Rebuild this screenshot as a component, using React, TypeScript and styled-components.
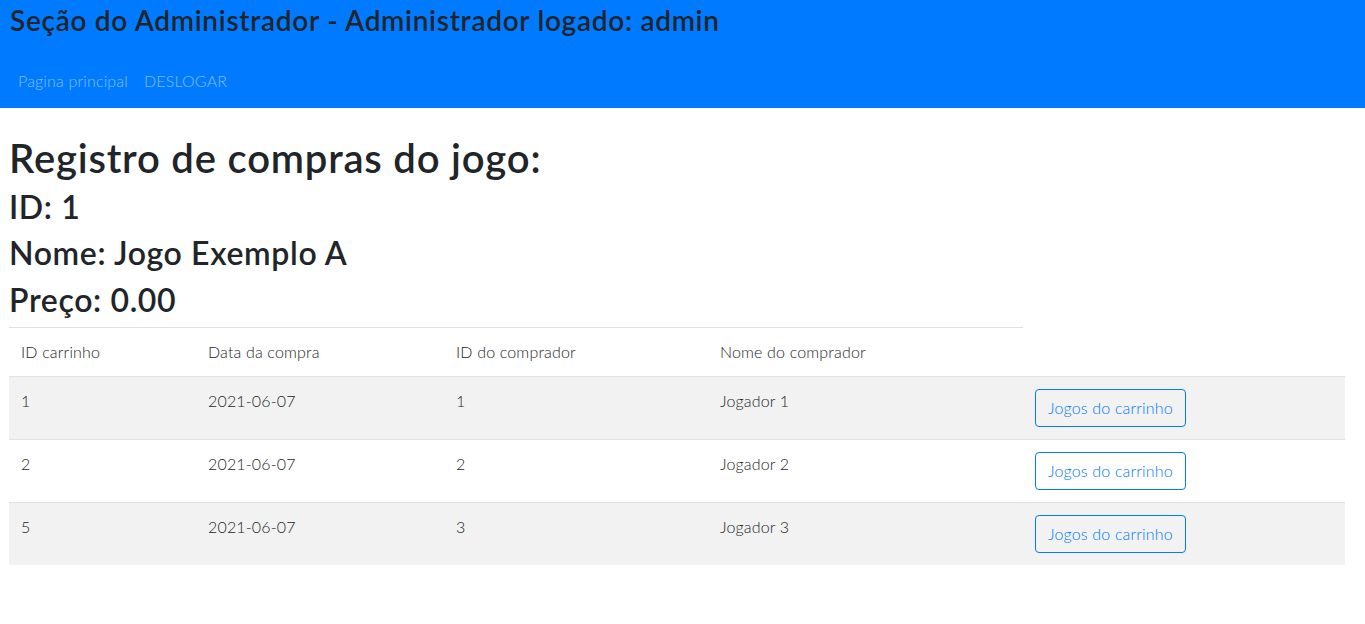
import React from "react";
import styled, { createGlobalStyle } from "styled-components";

const GlobalStyle = createGlobalStyle`
  *, *::before, *::after { box-sizing: border-box; }
  html, body { margin: 0; padding: 0; background: #fff; }
  body {
    font-family: Lato, "Noto Sans", sans-serif;
    font-size: 16px;
    line-height: 1.5;
    font-weight: 300;
    letter-spacing: 0.01em;
    color: #212529;
  }
`;

const Header = styled.header`
  height: 108px;
  background: #007bff;
  padding: 4px 10px 0;
`;

const HeaderTitle = styled.h3`
  margin: 0 0 23px;
  font-size: 28px;
  line-height: 33.6px;
  font-weight: 600;
  letter-spacing: 0.025em;
  color: #212529;
  white-space: nowrap;
`;

const Nav = styled.nav`
  display: flex;
  align-items: center;
`;

const NavLink = styled.a`
  display: block;
  padding: 8px;
  font-size: 16px;
  line-height: 24px;
  color: rgba(255, 255, 255, 0.5);
  text-decoration: none;
  cursor: pointer;
`;

const Main = styled.main`
  padding: 26px 20px 0 9px;
`;

const PageTitle = styled.h1`
  margin: 0 0 6px;
  font-size: 40px;
  line-height: 48px;
  font-weight: 600;
  letter-spacing: 0.02em;
`;

const InfoLine = styled.h2`
  margin: 0 0 8px;
  font-size: 32px;
  line-height: 38.4px;
  font-weight: 600;
  letter-spacing: 0.02em;
`;

const Table = styled.table`
  width: 100%;
  border-collapse: collapse;
  table-layout: fixed;
  color: #212529;
`;

const HeadCell = styled.th<{ $w?: number }>`
  width: ${(p) => (p.$w ? `${p.$w}px` : "auto")};
  padding: 12px;
  text-align: left;
  font-weight: 300;
  vertical-align: top;
  border-top: 1px solid #dee2e6;
  border-bottom: 1px solid #dee2e6;
`;

const Row = styled.tr<{ $striped: boolean }>`
  background: ${(p) => (p.$striped ? "#f2f2f2" : "transparent")};
`;

const Cell = styled.td`
  padding: 12px;
  vertical-align: top;
  border-top: 1px solid #dee2e6;
`;

const OutlineButton = styled.button`
  display: inline-block;
  padding: 6px 12px;
  font-family: inherit;
  font-size: 16px;
  line-height: 24px;
  font-weight: 300;
  letter-spacing: 0.01em;
  color: #007bff;
  background: transparent;
  border: 1px solid #007bff;
  border-radius: 4px;
  cursor: pointer;
`;

const purchases = [
  { cart: 1, date: "2021-06-07", buyerId: 1, buyer: "Jogador 1" },
  { cart: 2, date: "2021-06-07", buyerId: 2, buyer: "Jogador 2" },
  { cart: 5, date: "2021-06-07", buyerId: 3, buyer: "Jogador 3" },
];

export default function App() {
  return (
    <>
      <GlobalStyle />
      <Header>
        <HeaderTitle>Seção do Administrador - Administrador logado: admin</HeaderTitle>
        <Nav>
          <NavLink>Pagina principal</NavLink>
          <NavLink>DESLOGAR</NavLink>
        </Nav>
      </Header>
      <Main>
        <PageTitle>Registro de compras do jogo:</PageTitle>
        <InfoLine>ID: 1</InfoLine>
        <InfoLine>Nome: Jogo Exemplo A</InfoLine>
        <InfoLine>Preço: 0.00</InfoLine>
        <Table>
          <thead>
            <tr>
              <HeadCell $w={187}>ID carrinho</HeadCell>
              <HeadCell $w={248}>Data da compra</HeadCell>
              <HeadCell $w={264}>ID do comprador</HeadCell>
              <HeadCell $w={315}>Nome do comprador</HeadCell>
            </tr>
          </thead>
          <tbody>
            {purchases.map((p, i) => (
              <Row key={p.cart} $striped={i % 2 === 0}>
                <Cell>{p.cart}</Cell>
                <Cell>{p.date}</Cell>
                <Cell>{p.buyerId}</Cell>
                <Cell>{p.buyer}</Cell>
                <Cell>
                  <OutlineButton>Jogos do carrinho</OutlineButton>
                </Cell>
              </Row>
            ))}
          </tbody>
        </Table>
      </Main>
    </>
  );
}
